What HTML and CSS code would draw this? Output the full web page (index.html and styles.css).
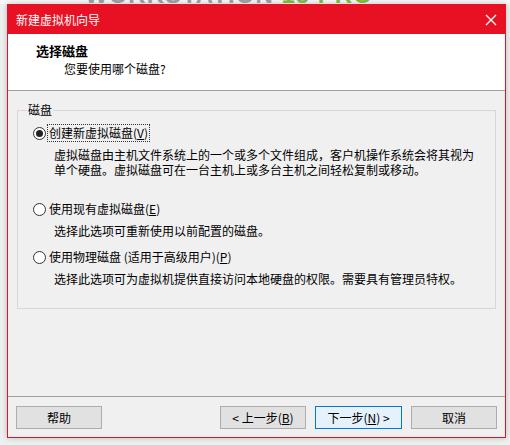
FILE: index.html
```html
<!DOCTYPE html>
<html lang="zh-CN">
<head>
<meta charset="utf-8">
<title>新建虚拟机向导</title>
<link rel="stylesheet" href="styles.css">
</head>
<body>
<div class="backdrop"><span class="wm"><span class="wm-grey">WORKSTATION</span> <span class="wm-green">15 PRO</span></span></div>
<div class="window">
  <div class="titlebar">
    <span class="title">新建虚拟机向导</span>
    <svg class="close" width="12" height="12" viewBox="0 0 12 12" aria-label="关闭"><path d="M1 1L11 11M11 1L1 11" stroke="#fff" stroke-width="1.3" fill="none"/></svg>
  </div>
  <div class="header">
    <div class="h-title">选择磁盘</div>
    <div class="h-sub">您要使用哪个磁盘?</div>
  </div>
  <div class="content">
    <fieldset class="group">
      <legend class="group-label">磁盘</legend>
      <div class="option opt-first">
        <div class="radio-row"><span class="radio checked"></span><span class="label focus">创建新虚拟磁盘(<u>V</u>)</span></div>
        <div class="desc">虚拟磁盘由主机文件系统上的一个或多个文件组成，客户机操作系统会将其视为<br>单个硬盘。虚拟磁盘可在一台主机上或多台主机之间轻松复制或移动。</div>
      </div>
      <div class="option opt-second">
        <div class="radio-row"><span class="radio"></span><span class="label">使用现有虚拟磁盘(<u>E</u>)</span></div>
        <div class="desc">选择此选项可重新使用以前配置的磁盘。</div>
      </div>
      <div class="option">
        <div class="radio-row"><span class="radio"></span><span class="label">使用物理磁盘 (适用于高级用户)(<u>P</u>)</span></div>
        <div class="desc">选择此选项可为虚拟机提供直接访问本地硬盘的权限。需要具有管理员特权。</div>
      </div>
    </fieldset>
  </div>
  <div class="footer">
    <button class="btn">帮助</button>
    <div class="spacer"></div>
    <button class="btn">&lt; 上一步(<u>B</u>)</button>
    <button class="btn btn-next primary">下一步(<u>N</u>) &gt;</button>
    <button class="btn btn-cancel">取消</button>
  </div>
</div>
</body>
</html>
```

FILE: styles.css
```css
* { box-sizing: border-box; }

html, body {
  margin: 0;
  padding: 0;
}

body {
  width: 510px;
  height: 445px;
  overflow: hidden;
  background: #edf1ef;
  font-family: "Noto Sans CJK SC", "Noto Sans", sans-serif;
  font-size: 12px;
  color: #000;
}

.backdrop {
  height: 4px;
  overflow: hidden;
  background: #f7f8f7;
  padding-left: 85px;
}

.wm {
  display: block;
  margin-top: -17px;
  font-family: "Liberation Sans", sans-serif;
  font-weight: bold;
  font-size: 24px;
  line-height: 24px;
  letter-spacing: 1px;
  white-space: nowrap;
}

.wm-grey { color: #9a9a9a; }
.wm-green { color: #7cb444; }

.window {
  margin-left: 7px;
  width: 499px;
  height: 434px;
  border: 1px solid #e81123;
  background: #f0f0f0;
  box-shadow: 0 0 6px rgba(0, 0, 0, 0.22);
  display: flex;
  flex-direction: column;
}

.titlebar {
  height: 29px;
  background: #e81123;
  display: flex;
  align-items: center;
  justify-content: space-between;
  padding: 0 8px 0 8px;
}

.title {
  color: #fff;
  font-size: 12px;
  line-height: 16px;
}

.close {
  display: block;
}

.header {
  height: 57px;
  background: #fff;
  border-bottom: 1px solid #a0a0a0;
  padding: 8px 0 0 28px;
}

.h-title {
  font-weight: bold;
  font-size: 13px;
  line-height: 18px;
}

.h-sub {
  padding-left: 28px;
  line-height: 18px;
}

.content {
  height: 305px;
  padding: 11px 9px 0 9px;
}

.group {
  margin: 0;
  padding: 6px 8px 22px 15px;
  border: 1px solid #d7d7d7;
  min-width: 0;
}

.group-label {
  padding: 0 1px;
  margin-left: -6px;
  line-height: 16px;
}

.radio-row {
  display: flex;
  align-items: center;
  height: 18px;
}

.radio {
  width: 13px;
  height: 13px;
  border: 1px solid #333;
  border-radius: 50%;
  background: #fff;
  margin-right: 1px;
  display: flex;
  align-items: center;
  justify-content: center;
  flex: none;
}

.radio.checked::after {
  content: "";
  width: 7px;
  height: 7px;
  border-radius: 50%;
  background: #222;
}

.label {
  padding: 0 1px;
  border: 1px solid transparent;
  line-height: 16px;
}

.label.focus {
  border: 1px dotted #333;
}

.desc {
  margin-top: 5px;
  padding-left: 21px;
  line-height: 15px;
}

.opt-first { margin-bottom: 23px; }
.opt-second { margin-bottom: 10px; }

.footer {
  flex: 1;
  border-top: 1px solid #a0a0a0;
  display: flex;
  align-items: flex-start;
  padding: 9px 8px 0 8px;
}

.spacer { flex: 1; }

.btn {
  width: 86px;
  height: 23px;
  padding: 0;
  border: 1px solid #adadad;
  background: #e1e1e1;
  font-family: "Noto Sans CJK SC", "Noto Sans", sans-serif;
  font-size: 12px;
  line-height: 18px;
  color: #000;
}

.btn.primary {
  background: #e5f1fb;
  border-color: #0078d7;
}

.btn-next {
  width: 87px;
  margin-left: 9px;
}

.btn-cancel { margin-left: 9px; }
```
